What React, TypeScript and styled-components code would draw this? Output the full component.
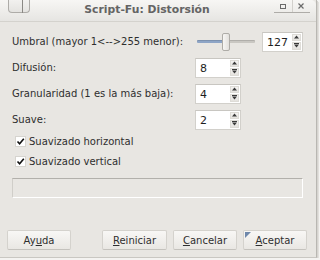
import React from "react";
import styled, { createGlobalStyle } from "styled-components";

const GlobalStyle = createGlobalStyle`
  html, body {
    margin: 0;
    padding: 0;
    background: #f4f3f1;
  }
  body {
    font-family: "DejaVu Sans", "Liberation Sans", sans-serif;
    font-size: 10px;
    color: #2e2e2e;
  }
`;

// Window frame
const Window = styled.div`
  width: 316px;
  height: 257px;
  background: #e8e6e2;
  border-right: 1px solid #b9b7b2;
  border-bottom: 1px solid #c9c7c2;
  box-shadow: 1px 1px 0 #d6d4d0, 2px 2px 0 #e2e0dc;
  display: flex;
  flex-direction: column;
  overflow: hidden;
`;

const TitleBar = styled.div`
  height: 21px;
  flex: none;
  display: flex;
  align-items: flex-start;
  background: linear-gradient(#f7f6f4, #e6e5e2);
  border-bottom: 1px solid #d4d2cd;
  border-top-right-radius: 5px;
`;

const MenuButton = styled.div`
  margin-left: 8px;
  width: 20px;
  height: 12px;
  border: 1px solid #aeaca8;
  border-top: none;
  border-radius: 0 0 4px 4px;
  background: linear-gradient(#f2f1ef, #e4e3e0);
  display: flex;
  justify-content: center;
`;

const MenuTick = styled.span`
  width: 1px;
  height: 13px;
  margin-left: 6px;
  background: #8a8884;
`;

const Title = styled.div`
  flex: 1;
  text-align: center;
  font-weight: bold;
  font-size: 10.8px;
  line-height: 19px;
  color: #646464;
  padding-right: 10px;
`;

const WinButtons = styled.div`
  margin-right: 6px;
  width: 36px;
  height: 12px;
  border-bottom: 1px solid #aeaca8;
  display: flex;
  align-items: center;
`;

const WinBtn = styled.div<{ $sep?: boolean }>`
  flex: 1;
  height: 12px;
  display: flex;
  align-items: center;
  justify-content: center;
  border-left: ${(p) => (p.$sep ? "1px solid #d2d0cc" : "none")};
`;

// Body
const Body = styled.div`
  flex: 1;
  display: flex;
  flex-direction: column;
  padding: 9px 13px 0 12px;
`;

const Form = styled.div`
  display: grid;
  grid-template-columns: 183px 1fr;
  grid-auto-rows: 21px;
  row-gap: 5px;
  align-items: center;
`;

const Label = styled.div`
  white-space: nowrap;
  line-height: 21px;
`;

const Controls = styled.div`
  display: flex;
  align-items: center;
  height: 21px;
`;

const Slider = styled.div`
  position: relative;
  width: 58px;
  height: 18px;
  margin-left: 2px;
  margin-right: 7px;
  display: flex;
  align-items: center;
`;

const Track = styled.div<{ $fill: number }>`
  width: 100%;
  height: 3px;
  border-radius: 1px;
  background: linear-gradient(
    to right,
    #8ea5c6 0,
    #8ea5c6 ${(p) => p.$fill}%,
    #c9c7c2 ${(p) => p.$fill}%,
    #c9c7c2 100%
  );
  box-shadow: inset 0 1px 0 rgba(0, 0, 0, 0.12);
`;

const Thumb = styled.div`
  position: absolute;
  left: 25px;
  top: 0;
  width: 6px;
  height: 16px;
  border: 1px solid #aeaca7;
  border-radius: 2px;
  background: linear-gradient(to right, #f7f6f4, #e2e0dc);
`;

const Spin = styled.div<{ $w: number }>`
  width: ${(p) => p.$w}px;
  height: 20px;
  box-sizing: border-box;
  border: 1px solid #d2d0cb;
  border-top-color: #c8c6c1;
  background: #fff;
  display: flex;
  padding: 1px 1px 1px 0;
`;

const SpinValue = styled.div`
  flex: 1;
  padding-left: 4px;
  font-size: 11px;
  line-height: 17px;
  color: #1e1e1e;
`;

const SpinArrows = styled.div`
  width: 9px;
  display: flex;
  flex-direction: column;
  gap: 1px;
`;

const SpinArrow = styled.div`
  flex: 1;
  background: linear-gradient(#f4f3f1, #e4e2de);
  border: 1px solid #dedcd7;
  display: flex;
  align-items: center;
  justify-content: center;
`;

const CheckList = styled.div`
  display: flex;
  flex-direction: column;
  gap: 3px;
  margin-top: 3px;
  padding-left: 3px;
`;

const CheckRow = styled.label`
  display: flex;
  align-items: center;
  gap: 3px;
  height: 17px;
`;

const CheckBox = styled.span`
  width: 11px;
  height: 11px;
  box-sizing: border-box;
  border: 1px solid #d6d4cf;
  background: #fff;
  display: flex;
  align-items: center;
  justify-content: center;
`;

const Progress = styled.div`
  margin-top: 8px;
  width: 291px;
  height: 20px;
  box-sizing: border-box;
  border: 1px solid #fff;
  border-top-color: #b2b0ab;
  border-left-color: #d0cec9;
  background: #e8e6e2;
`;

const ButtonBar = styled.div`
  display: flex;
  justify-content: space-between;
  margin: 32px -4px 0 -5px;
`;

const ButtonGroup = styled.div`
  display: flex;
  gap: 6px;
`;

const Button = styled.button<{ $w: number; $default?: boolean }>`
  position: relative;
  width: ${(p) => p.$w}px;
  height: 20px;
  padding: 0;
  border: 1px solid #d4d2cd;
  border-bottom-color: #c4c2bd;
  border-radius: 2px;
  background: linear-gradient(#f8f7f5, #e9e7e3);
  font-family: "DejaVu Sans", "Liberation Sans", sans-serif;
  font-size: 10px;
  color: #2e2e2e;
  cursor: pointer;
  &::before {
    content: "";
    display: ${(p) => (p.$default ? "block" : "none")};
    position: absolute;
    left: 1px;
    top: 1px;
    border-top: 6px solid #6f88ab;
    border-right: 6px solid transparent;
  }
`;

const Mn = styled.span`
  text-decoration: underline;
  text-underline-offset: 1px;
`;

const Up = () => (
  <svg width="5" height="4" viewBox="0 0 5 4">
    <path d="M2.5 0.5 L5 3.5 L0 3.5 Z" fill="#3a3a3a" />
  </svg>
);

const Down = () => (
  <svg width="5" height="5" viewBox="0 0 5 5">
    <rect x="0" y="0" width="5" height="1" fill="#3a3a3a" />
    <path d="M0 1.5 L5 1.5 L2.5 4.5 Z" fill="#3a3a3a" />
  </svg>
);

const Check = () => (
  <svg width="9" height="9" viewBox="0 0 9 9">
    <path d="M1.5 4.5 L3.6 6.8 L7.8 1.8" stroke="#111" strokeWidth="1.6" fill="none" />
  </svg>
);

interface SpinProps {
  value: number;
  width: number;
}

const SpinButton = ({ value, width }: SpinProps) => (
  <Spin $w={width}>
    <SpinValue>{value}</SpinValue>
    <SpinArrows>
      <SpinArrow>
        <Up />
      </SpinArrow>
      <SpinArrow>
        <Down />
      </SpinArrow>
    </SpinArrows>
  </Spin>
);

const fields = [
  { label: "Difusión:", value: 8 },
  { label: "Granularidad (1 es la más baja):", value: 4 },
  { label: "Suave:", value: 2 },
];

const checks = ["Suavizado horizontal", "Suavizado vertical"];

export default function App() {
  return (
    <>
      <GlobalStyle />
      <Window>
        <TitleBar>
          <MenuButton>
            <MenuTick />
          </MenuButton>
          <Title>Script-Fu: Distorsión</Title>
          <WinButtons>
            <WinBtn>
              <svg width="6" height="5" viewBox="0 0 6 5">
                <rect x="0.5" y="0.5" width="5" height="4" stroke="#6a6a6a" fill="none" />
              </svg>
            </WinBtn>
            <WinBtn $sep>
              <svg width="6" height="6" viewBox="0 0 6 6">
                <path d="M0.5 0.5 L5.5 5.5 M5.5 0.5 L0.5 5.5" stroke="#6a6a6a" strokeWidth="1.2" />
              </svg>
            </WinBtn>
          </WinButtons>
        </TitleBar>
        <Body>
          <Form>
            <Label>Umbral (mayor 1&lt;--&gt;255 menor):</Label>
            <Controls>
              <Slider>
                <Track $fill={45} />
                <Thumb />
              </Slider>
              <SpinButton value={127} width={41} />
            </Controls>
            {fields.map((f) => (
              <React.Fragment key={f.label}>
                <Label>{f.label}</Label>
                <Controls>
                  <SpinButton value={f.value} width={46} />
                </Controls>
              </React.Fragment>
            ))}
          </Form>
          <CheckList>
            {checks.map((c) => (
              <CheckRow key={c}>
                <CheckBox>
                  <Check />
                </CheckBox>
                {c}
              </CheckRow>
            ))}
          </CheckList>
          <Progress />
          <ButtonBar>
            <Button $w={64}>
              Ay<Mn>u</Mn>da
            </Button>
            <ButtonGroup>
              <Button $w={65}>
                <Mn>R</Mn>einiciar
              </Button>
              <Button $w={64}>
                <Mn>C</Mn>ancelar
              </Button>
              <Button $w={64} $default>
                <Mn>A</Mn>ceptar
              </Button>
            </ButtonGroup>
          </ButtonBar>
        </Body>
      </Window>
    </>
  );
}
